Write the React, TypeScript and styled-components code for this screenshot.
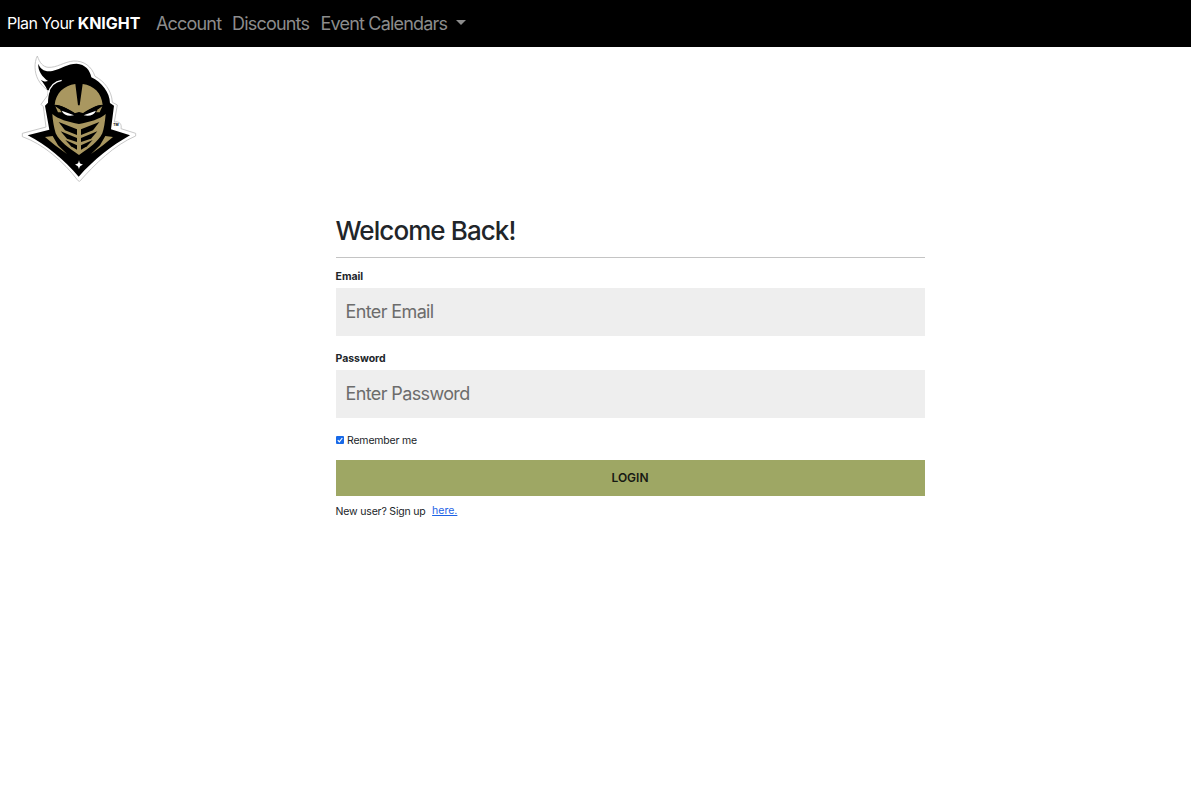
import React from 'react';
import styled, { createGlobalStyle } from 'styled-components';

const GlobalStyle = createGlobalStyle`
  *, *::before, *::after { box-sizing: border-box; }
  body {
    margin: 0;
    background: #fff;
    color: #212529;
    font-family: Inter, "Liberation Sans", sans-serif;
  }
`;

const Navbar = styled.nav`
  display: flex;
  align-items: center;
  height: 47px;
  padding-left: 7px;
  background: #000;
  white-space: nowrap;
`;

const Brand = styled.a`
  width: 149px;
  padding-bottom: 1px;
  color: #fff;
  font-size: 16px;
  line-height: 24px;
  letter-spacing: -0.55px;

  b { letter-spacing: -0.05px; }
`;

const NavLink = styled.a<{ $width: number }>`
  width: ${({ $width }) => $width}px;
  color: #8c8c8c;
  font-size: 18px;
  line-height: 26px;
  padding-top: 1px;
  letter-spacing: -0.81px;
`;

const Caret = styled.span`
  display: inline-block;
  margin-left: 9px;
  vertical-align: 5px;
  border-top: 5px solid #8c8c8c;
  border-left: 5px solid transparent;
  border-right: 5px solid transparent;
`;

const Logo = styled.svg`
  display: block;
  width: 130px;
  height: 136px;
  margin: 3px 0 0 15px;
`;

const Form = styled.form`
  display: flex;
  flex-direction: column;
  width: 589px;
  margin: 28px 0 0 336px;
`;

const Title = styled.h1`
  height: 44px;
  margin: 0;
  padding-top: 1px;
  border-bottom: 1px solid #c4c4c4;
  font-size: 26px;
  font-weight: 500;
  line-height: 32px;
  letter-spacing: -0.92px;
  text-indent: -0.5px;
`;

const Label = styled.label`
  height: 30px;
  padding-top: 11px;
  font-size: 10.5px;
  font-weight: 700;
  line-height: 16px;
  letter-spacing: -0.05px;
  text-indent: -0.4px;
`;

const Input = styled.input`
  height: 48px;
  margin-bottom: 22px;
  padding: 0 9.5px 2px;
  border: 0;
  border-radius: 0;
  background: #eee;
  font-family: inherit;
  font-size: 18px;
  letter-spacing: -0.62px;
  &::placeholder { color: #6c6c6c; opacity: 1; }
`;

const PasswordLabel = styled(Label)`
  height: 12px;
  padding-top: 0;
  line-height: 1px;
`;

const Remember = styled.label`
  display: flex;
  align-items: center;
  gap: 3px;
  height: 16px;
  margin: -8px 0 12px;
  font-size: 10.5px;
  letter-spacing: -0.18px;
`;

const Checkbox = styled.span`
  display: flex;
  width: 8px;
  height: 8px;
  border-radius: 1px;
  background: #1769e8;
`;

const LoginButton = styled.button`
  height: 36px;
  padding: 0 1px 2px 0;
  border: 0;
  background: #9ea764;
  color: #171913;
  font-family: inherit;
  font-size: 12px;
  font-weight: 600;
`;

const Signup = styled.div`
  display: flex;
  gap: 6.5px;
  padding-top: 8px;
  font-size: 10.5px;
  line-height: 15px;
  letter-spacing: -0.18px;
  text-indent: -0.4px;
`;

const SignupLink = styled.a`
  margin-top: -1px;
  color: #1d63e6;
  letter-spacing: 0;
  text-decoration: underline;
  text-indent: 0;
`;

function KnightLogo() {
  return (
    <Logo viewBox="0 0 390 408" role="img" aria-label="Knight">
      <path
        d="M67 18C57 37 58 68 69 88C76 103 88 113 99 122L98 136L78 163L85 170L93 231L22 250V260C82 281 145 333 189 392L194 394C240 342 298 285 362 258V250L318 236C321 222 313 213 298 216L307 165L292 157C290 121 267 93 240 79C230 49 207 32 176 33C148 35 125 54 99 52C83 50 74 38 67 18Z"
        fill="#fff" stroke="#bdbdbd" strokeWidth="2.5"
      />
      <path d="M70 41C76 58 90 67 112 63C140 56 157 41 185 41C210 42 226 61 229 82C260 97 284 127 285 159L297 167L288 238L345 256C288 288 237 329 191 380C149 330 93 284 38 256L103 239L90 167L99 158C99 145 101 133 105 122L97 120C91 107 85 98 77 89C85 94 91 96 99 93C82 80 68 63 70 41Z" />
      <path d="M99 131C105 109 121 94 140 91" fill="none" stroke="#fff" strokeWidth="4" />
      <g fill="#a99760">
        <path d="M181 102C147 106 122 130 119 165C138 165 158 177 179 190L192 186L206 190C225 178 244 165 263 165C260 130 237 106 203 102L194 166H189Z" />
        <path d="M121 169L129 187L140 187L134 178Z" />
        <path d="M262 169L254 187L243 187L249 178Z" />
        <path d="M112 192C128 207 160 216 192 222C224 216 256 207 272 192C270 216 267 236 262 250C249 276 223 294 192 315C161 294 135 276 122 250C117 233 113 212 112 192Z" />
        <path d="M90 261L113 258L129 286L156 312L120 286Z" />
        <path d="M294 261L271 258L255 286L228 312L264 286Z" />
      </g>
      <path d="M119 164C139 164 160 177 192 196C224 177 243 164 263 164L250 176L208 197H176L134 177Z" />
      <g>
        <path d="M131 216L186 238V255L150 241Z" />
        <path d="M137 244L186 264V276L156 266Z" />
        <path d="M151 270L186 286V299L168 289Z" />
        <path d="M253 216L198 238V255L234 241Z" />
        <path d="M247 244L198 264V276L228 266Z" />
        <path d="M233 270L198 286V299L216 289Z" />
      </g>
      <g fill="#fff">
        <path d="M140 182L177 196C159 200 146 195 140 182Z" />
        <path d="M243 182L206 196C224 200 237 195 243 182Z" />
        <path d="M192 331C194 341 196 342 204 344C196 347 194 348 192 358C190 348 188 347 180 344C188 342 190 341 192 331Z" />
      </g>
      <text x="295" y="228" fontSize="10" fontWeight="700" fontFamily="Inter, sans-serif">TM</text>
    </Logo>
  );
}

export default function App() {
  return (
    <>
      <GlobalStyle />
      <Navbar>
        <Brand>Plan Your <b>KNIGHT</b></Brand>
        <NavLink $width={76}>Account</NavLink>
        <NavLink $width={88.5}>Discounts</NavLink>
        <NavLink $width={150}>Event Calendars<Caret /></NavLink>
      </Navbar>
      <KnightLogo />
      <Form>
        <Title>Welcome Back!</Title>
        <Label htmlFor="email">Email</Label>
        <Input id="email" type="text" placeholder="Enter Email" />
        <PasswordLabel htmlFor="password">Password</PasswordLabel>
        <Input id="password" type="password" placeholder="Enter Password" />
        <Remember>
          <Checkbox>
            <svg viewBox="0 0 8 8"><path d="M1.8 4.2L3.3 5.8L6.3 2" fill="none" stroke="#fff" strokeWidth="1.2" /></svg>
          </Checkbox>
          Remember me
        </Remember>
        <LoginButton type="button">LOGIN</LoginButton>
        <Signup>New user? Sign up <SignupLink>here.</SignupLink></Signup>
      </Form>
    </>
  );
}
